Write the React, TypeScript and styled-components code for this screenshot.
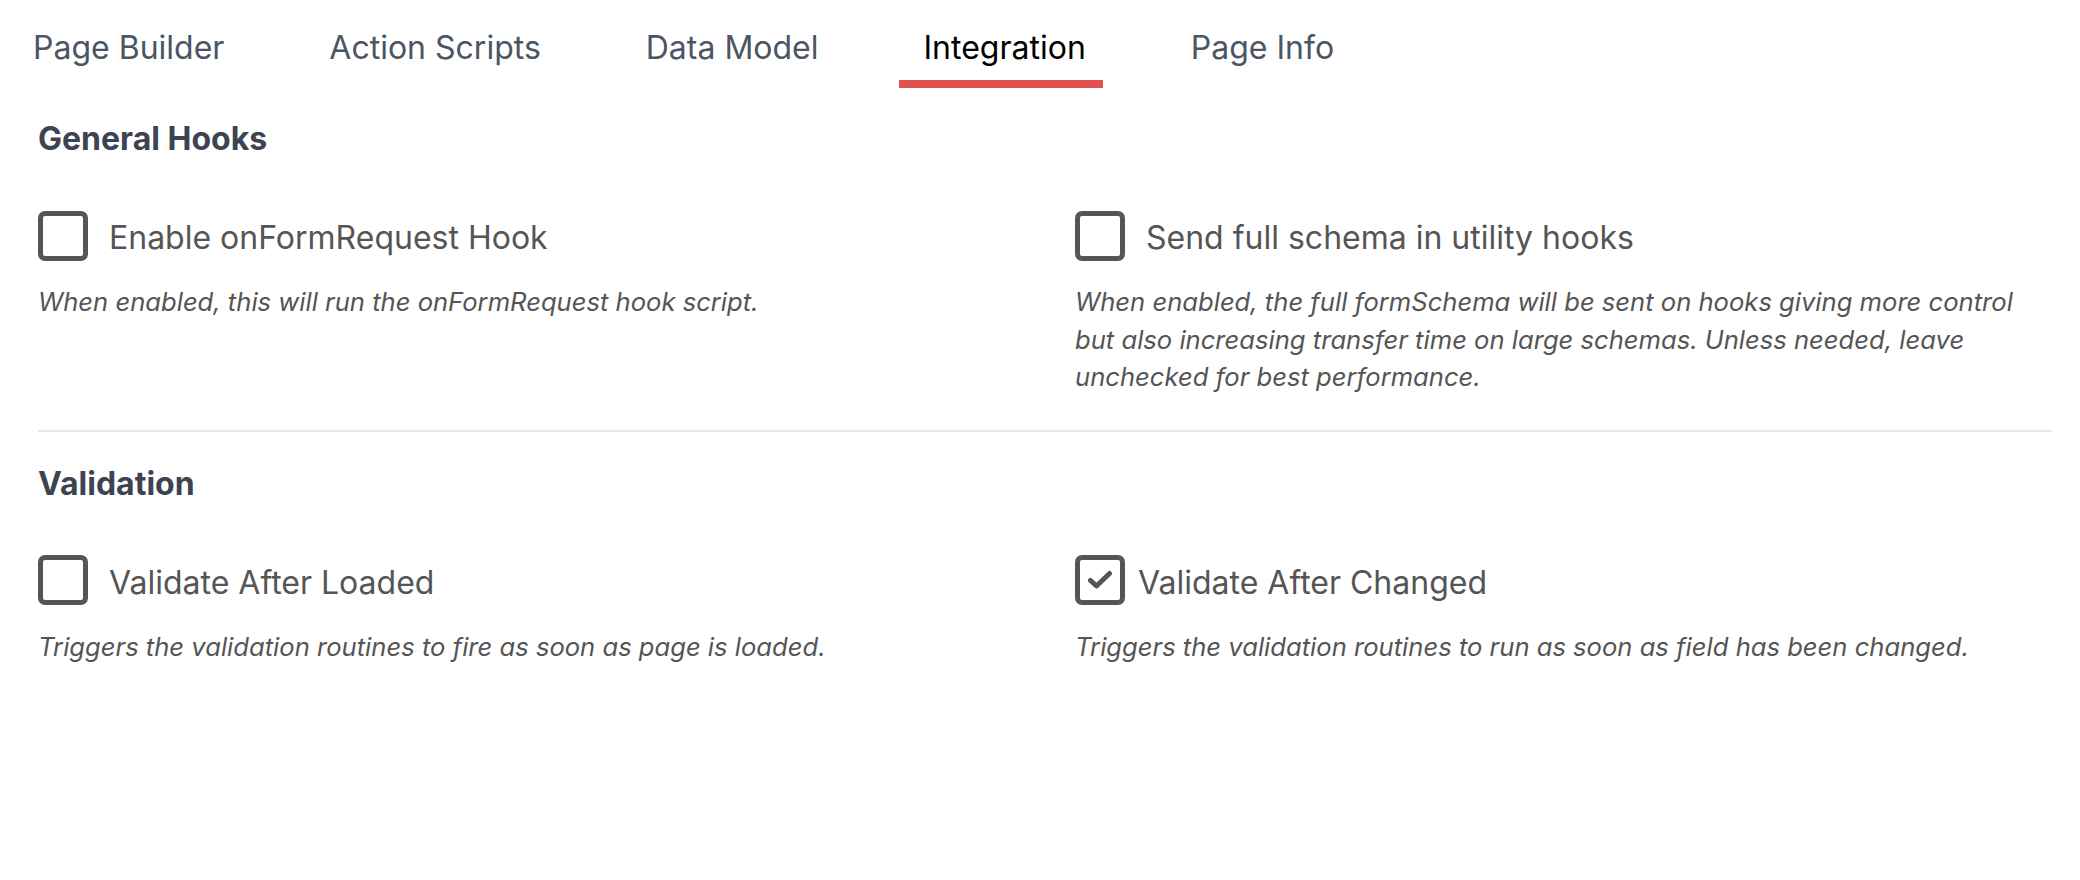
import { useState } from "react";
import styled, { createGlobalStyle } from "styled-components";

const tabs = ["Page Builder", "Action Scripts", "Data Model", "Integration", "Page Info"];

interface Option {
  id: string;
  label: string;
  description: string;
}

interface SectionData {
  title: string;
  options: Option[];
}

const sections: SectionData[] = [
  {
    title: "General Hooks",
    options: [
      {
        id: "onFormRequest",
        label: "Enable onFormRequest Hook",
        description: "When enabled, this will run the onFormRequest hook script.",
      },
      {
        id: "fullSchema",
        label: "Send full schema in utility hooks",
        description:
          "When enabled, the full formSchema will be sent on hooks giving more control but also increasing transfer time on large schemas. Unless needed, leave unchecked for best performance.",
      },
    ],
  },
  {
    title: "Validation",
    options: [
      {
        id: "afterLoaded",
        label: "Validate After Loaded",
        description: "Triggers the validation routines to fire as soon as page is loaded.",
      },
      {
        id: "afterChanged",
        label: "Validate After Changed",
        description: "Triggers the validation routines to run as soon as field has been changed.",
      },
    ],
  },
];

export default function App() {
  const [activeTab, setActiveTab] = useState("Integration");
  const [checked, setChecked] = useState<Record<string, boolean>>({ afterChanged: true });

  const toggle = (id: string) => {
    setChecked((prev) => ({ ...prev, [id]: !prev[id] }));
  };

  return (
    <>
      <GlobalStyle />
      <TabBar>
        {tabs.map((tab) => (
          <Tab key={tab} active={tab === activeTab} onClick={() => setActiveTab(tab)}>
            {tab}
          </Tab>
        ))}
      </TabBar>

      <Content>
        {sections.map((section, i) => (
          <Section key={section.title} divided={i < sections.length - 1}>
            <SectionTitle>{section.title}</SectionTitle>
            <OptionGrid>
              {section.options.map((option) => {
                const isChecked = !!checked[option.id];
                return (
                  <OptionItem key={option.id}>
                    <CheckRow onClick={() => toggle(option.id)}>
                      <CheckBox checked={isChecked}>
                        {isChecked && (
                          <svg width="26" height="20" viewBox="0 0 26 20" fill="none">
                            <path
                              d="M3.5 10.5 L9.5 16 L22.5 3.5"
                              stroke="#555"
                              strokeWidth="5"
                              strokeLinecap="round"
                              strokeLinejoin="round"
                            />
                          </svg>
                        )}
                      </CheckBox>
                      <CheckLabel checked={isChecked}>{option.label}</CheckLabel>
                    </CheckRow>
                    <Description>{option.description}</Description>
                  </OptionItem>
                );
              })}
            </OptionGrid>
          </Section>
        ))}
      </Content>
    </>
  );
}

const GlobalStyle = createGlobalStyle`
  body {
    margin: 0;
    background: #fff;
    font-family: Inter, "Noto Sans", sans-serif;
  }
`;

const TabBar = styled.nav`
  display: flex;
  gap: 63px;
  padding-left: 8px;
`;

const Tab = styled.button<{ active: boolean }>`
  border: none;
  background: none;
  cursor: pointer;
  font-family: inherit;
  font-size: 32px;
  line-height: 1.5;
  padding: 24px 17px 8px 25px;
  color: ${(p) => (p.active ? "#000" : "#4b5563")};
  border-bottom: 8px solid ${(p) => (p.active ? "#e05252" : "transparent")};
`;

const Content = styled.main`
  padding: 27px 28px 0 38px;
`;

const Section = styled.section<{ divided: boolean }>`
  padding-bottom: 34px;
  margin-bottom: 28px;
  border-bottom: 2px solid ${(p) => (p.divided ? "#e5e7eb" : "transparent")};
`;

const SectionTitle = styled.h3`
  margin: 0 0 46px;
  font-size: 32px;
  line-height: 1.5;
  font-weight: 700;
  color: #3d4451;
`;

const OptionGrid = styled.div`
  display: grid;
  grid-template-columns: 1fr 1fr;
  column-gap: 60px;
`;

const OptionItem = styled.div`
  display: flex;
  flex-direction: column;
  gap: 21px;
`;

const CheckRow = styled.label`
  display: flex;
  align-items: center;
  cursor: pointer;
`;

const CheckBox = styled.span<{ checked: boolean }>`
  box-sizing: border-box;
  width: 50px;
  height: 50px;
  flex-shrink: 0;
  border: 5px solid #555;
  border-radius: 7px;
  background: #fff;
  display: flex;
  align-items: center;
  justify-content: center;
`;

const CheckLabel = styled.span<{ checked: boolean }>`
  margin-left: ${(p) => (p.checked ? "13px" : "21px")};
  padding-top: 5px;
  font-size: 32px;
  line-height: 1.5;
  color: #555;
`;

const Description = styled.p`
  margin: 0;
  font-size: 25.6px;
  line-height: 37.5px;
  font-style: italic;
  color: #555;
`;
